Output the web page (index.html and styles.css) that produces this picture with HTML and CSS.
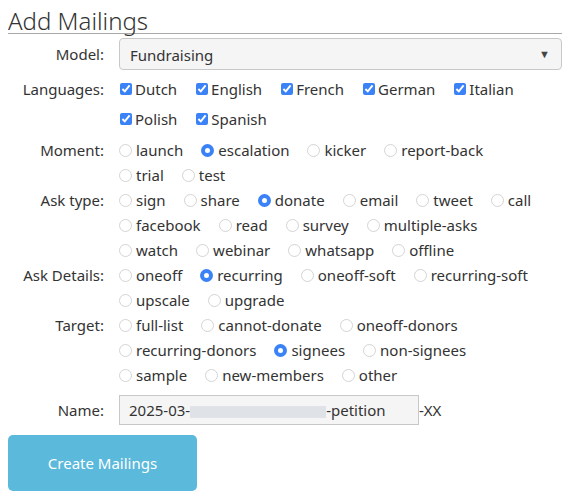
FILE: index.html
```html
<!DOCTYPE html>
<html lang="en">
	<head>
		<meta charset="UTF-8">
		<title>Add Mailings</title>
		<link rel="stylesheet" href="styles.css">
	</head>
	<body>
		<h2 class="title">Add Mailings</h2>
		<form class="mailings" action="#">
			<div class="row row-model">
				<label class="field-label" for="model">Model:</label>
				<div class="select-wrap">
					<select id="model" name="model">
						<option>Fundraising</option>
					</select>
					<span class="caret">&#9660;</span>
				</div>
			</div>

			<div class="row row-checks">
				<span class="field-label">Languages:</span>
				<div class="options">
					<label><input type="checkbox" checked> Dutch</label>
					<label><input type="checkbox" checked> English</label>
					<label><input type="checkbox" checked> French</label>
					<label><input type="checkbox" checked> German</label>
					<label><input type="checkbox" checked> Italian</label>
					<label><input type="checkbox" checked> Polish</label>
					<label><input type="checkbox" checked> Spanish</label>
				</div>
			</div>

			<div class="row">
				<span class="field-label">Moment:</span>
				<div class="options">
					<label><input type="radio" name="moment"> launch</label>
					<label><input type="radio" name="moment" checked> escalation</label>
					<label><input type="radio" name="moment"> kicker</label>
					<label><input type="radio" name="moment"> report-back</label>
					<label><input type="radio" name="moment"> trial</label>
					<label><input type="radio" name="moment"> test</label>
				</div>
			</div>

			<div class="row">
				<span class="field-label">Ask type:</span>
				<div class="options">
					<label><input type="radio" name="ask"> sign</label>
					<label><input type="radio" name="ask"> share</label>
					<label><input type="radio" name="ask" checked> donate</label>
					<label><input type="radio" name="ask"> email</label>
					<label><input type="radio" name="ask"> tweet</label>
					<label><input type="radio" name="ask"> call</label>
					<label><input type="radio" name="ask"> facebook</label>
					<label><input type="radio" name="ask"> read</label>
					<label><input type="radio" name="ask"> survey</label>
					<label><input type="radio" name="ask"> multiple-asks</label>
					<label><input type="radio" name="ask"> watch</label>
					<label><input type="radio" name="ask"> webinar</label>
					<label><input type="radio" name="ask"> whatsapp</label>
					<label><input type="radio" name="ask"> offline</label>
				</div>
			</div>

			<div class="row">
				<span class="field-label">Ask Details:</span>
				<div class="options">
					<label><input type="radio" name="details"> oneoff</label>
					<label><input type="radio" name="details" checked> recurring</label>
					<label><input type="radio" name="details"> oneoff-soft</label>
					<label><input type="radio" name="details"> recurring-soft</label>
					<label><input type="radio" name="details"> upscale</label>
					<label><input type="radio" name="details"> upgrade</label>
				</div>
			</div>

			<div class="row">
				<span class="field-label">Target:</span>
				<div class="options">
					<label><input type="radio" name="target"> full-list</label>
					<label><input type="radio" name="target"> cannot-donate</label>
					<label><input type="radio" name="target"> oneoff-donors</label>
					<label><input type="radio" name="target"> recurring-donors</label>
					<label><input type="radio" name="target" checked> signees</label>
					<label><input type="radio" name="target"> non-signees</label>
					<label><input type="radio" name="target"> sample</label>
					<label><input type="radio" name="target"> new-members</label>
					<label><input type="radio" name="target"> other</label>
				</div>
			</div>

			<div class="row row-name">
				<label class="field-label" for="name">Name:</label>
				<div class="name-field">
					<div class="name-input" id="name">2025-03-<span class="redacted"></span>-petition</div>
					<span class="suffix">-XX</span>
				</div>
			</div>

			<button type="submit" class="btn-create">Create Mailings</button>
		</form>
	</body>
</html>
```

FILE: styles.css
```css
body {
	margin: 8px;
	font-family: "Noto Sans", "Open Sans", sans-serif;
	font-size: 15px;
	color: #333;
}
.title {
	font-size: 24px;
	font-weight: 300;
	line-height: 25px;
	margin: 0;
	border-bottom: 1px solid #a8a8a8;
}
.mailings {
	margin-top: 4px;
}
.row {
	display: grid;
	grid-template-columns: 96px 1fr;
	column-gap: 15px;
	line-height: 25px;
}
.field-label {
	text-align: right;
}
.options {
	display: flex;
	flex-wrap: wrap;
}
.options label {
	display: flex;
	align-items: center;
	margin-right: 18px;
	white-space: nowrap;
}

/* model select */
.row-model {
	line-height: 32px;
	margin-bottom: 4px;
}
.select-wrap {
	position: relative;
}
.select-wrap select {
	appearance: none;
	display: block;
	width: 100%;
	height: 32px;
	padding: 0 10px;
	font: inherit;
	color: #333;
	background: #f5f5f5;
	border: 1px solid #c8c8c8;
	border-radius: 4px;
}
.caret {
	position: absolute;
	right: 12px;
	top: 0;
	font-size: 11px;
	color: #444;
	pointer-events: none;
}

/* checkboxes */
.row-checks {
	line-height: 30px;
	margin-bottom: 4px;
}
.row-checks .options label {
	margin-right: 18px;
}
input[type=checkbox] {
	accent-color: #3b82f6;
	width: 12px;
	height: 12px;
	margin: 0 3px 0 1px;
}

/* radios */
input[type=radio] {
	appearance: none;
	width: 13px;
	height: 13px;
	margin: 0 4px 0 0;
	border: 1px solid #d4d4d4;
	border-radius: 50%;
	background: #fff;
}
input[type=radio]:checked {
	border: 4px solid #3b82f6;
	background: #fff;
}

/* name */
.row-name {
	margin-top: 7px;
	line-height: 30px;
}
.name-field {
	display: flex;
	align-items: center;
}
.name-input {
	width: 300px;
	height: 30px;
	padding: 0 9px;
	background: #f5f5f5;
	border: 1px solid #c8c8c8;
	box-sizing: border-box;
	line-height: 28px;
	white-space: nowrap;
	overflow: hidden;
}
.redacted {
	display: inline-block;
	width: 136px;
	height: 12px;
	vertical-align: middle;
	background: #dfe2e6;
}

.btn-create {
	display: block;
	margin-top: 10px;
	width: 189px;
	height: 56px;
	border: 0;
	border-radius: 5px;
	background: #5bb9db;
	color: #fff;
	font: inherit;
	font-size: 15px;
}
```
